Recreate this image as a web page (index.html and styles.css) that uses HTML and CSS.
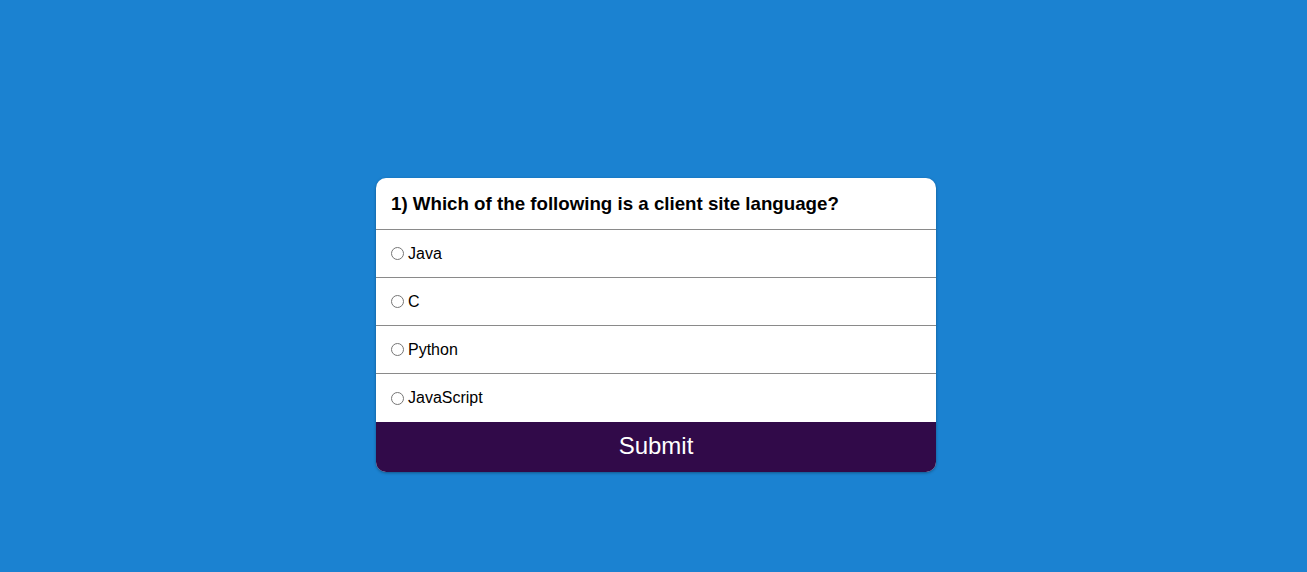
FILE: index.html
```html
<!DOCTYPE html>
<html>
<head>
<meta charset="utf-8">
<link rel="stylesheet" href="styles.css">
</head>
<body>
<div class="page">
  <div class="quiz">
    <div class="quiz-header">
      <h2 class="question">1) Which of the following is a client site language?</h2>
    </div>
    <ul class="options">
      <li class="option"><label><input type="radio" name="answer"><span>Java</span></label></li>
      <li class="option"><label><input type="radio" name="answer"><span>C</span></label></li>
      <li class="option"><label><input type="radio" name="answer"><span>Python</span></label></li>
      <li class="option last"><label><input type="radio" name="answer"><span>JavaScript</span></label></li>
    </ul>
    <button class="submit">Submit</button>
  </div>
</div>
</body>
</html>
```
FILE: styles.css
```css
html, body {
  margin: 0;
  padding: 0;
  height: 100%;
}
body {
  background: #1b82d1;
  font-family: "Liberation Sans", Arial, sans-serif;
}
.page {
  padding: 178px 0 0 376px;
}
.quiz {
  width: 560px;
  background: #fff;
  border-radius: 10px;
  overflow: hidden;
  box-shadow: 0 1px 3px rgba(0, 0, 0, 0.35);
}
.quiz-header {
  height: 51px;
  border-bottom: 1px solid #8a8a8a;
  display: flex;
  align-items: center;
  padding: 0 15px;
}
.question {
  margin: 0;
  font-size: 18.72px;
  font-weight: bold;
  color: #000;
}
.options {
  list-style: none;
  margin: 0;
  padding: 0;
}
.option {
  height: 47px;
  border-bottom: 1px solid #8a8a8a;
  display: flex;
  align-items: center;
  padding: 0 15px;
  font-size: 16px;
  color: #000;
}
.option.last {
  height: 48px;
  border-bottom: none;
}
.option label {
  display: flex;
  align-items: center;
}
.option input {
  margin: 0 4px 0 0;
  width: 13px;
  height: 13px;
}
.submit {
  display: block;
  width: 100%;
  height: 50px;
  border: none;
  background: #310a49;
  color: #fff;
  font-family: "Liberation Sans", Arial, sans-serif;
  font-size: 24px;
  padding: 0 0 2px;
  cursor: pointer;
}
```
